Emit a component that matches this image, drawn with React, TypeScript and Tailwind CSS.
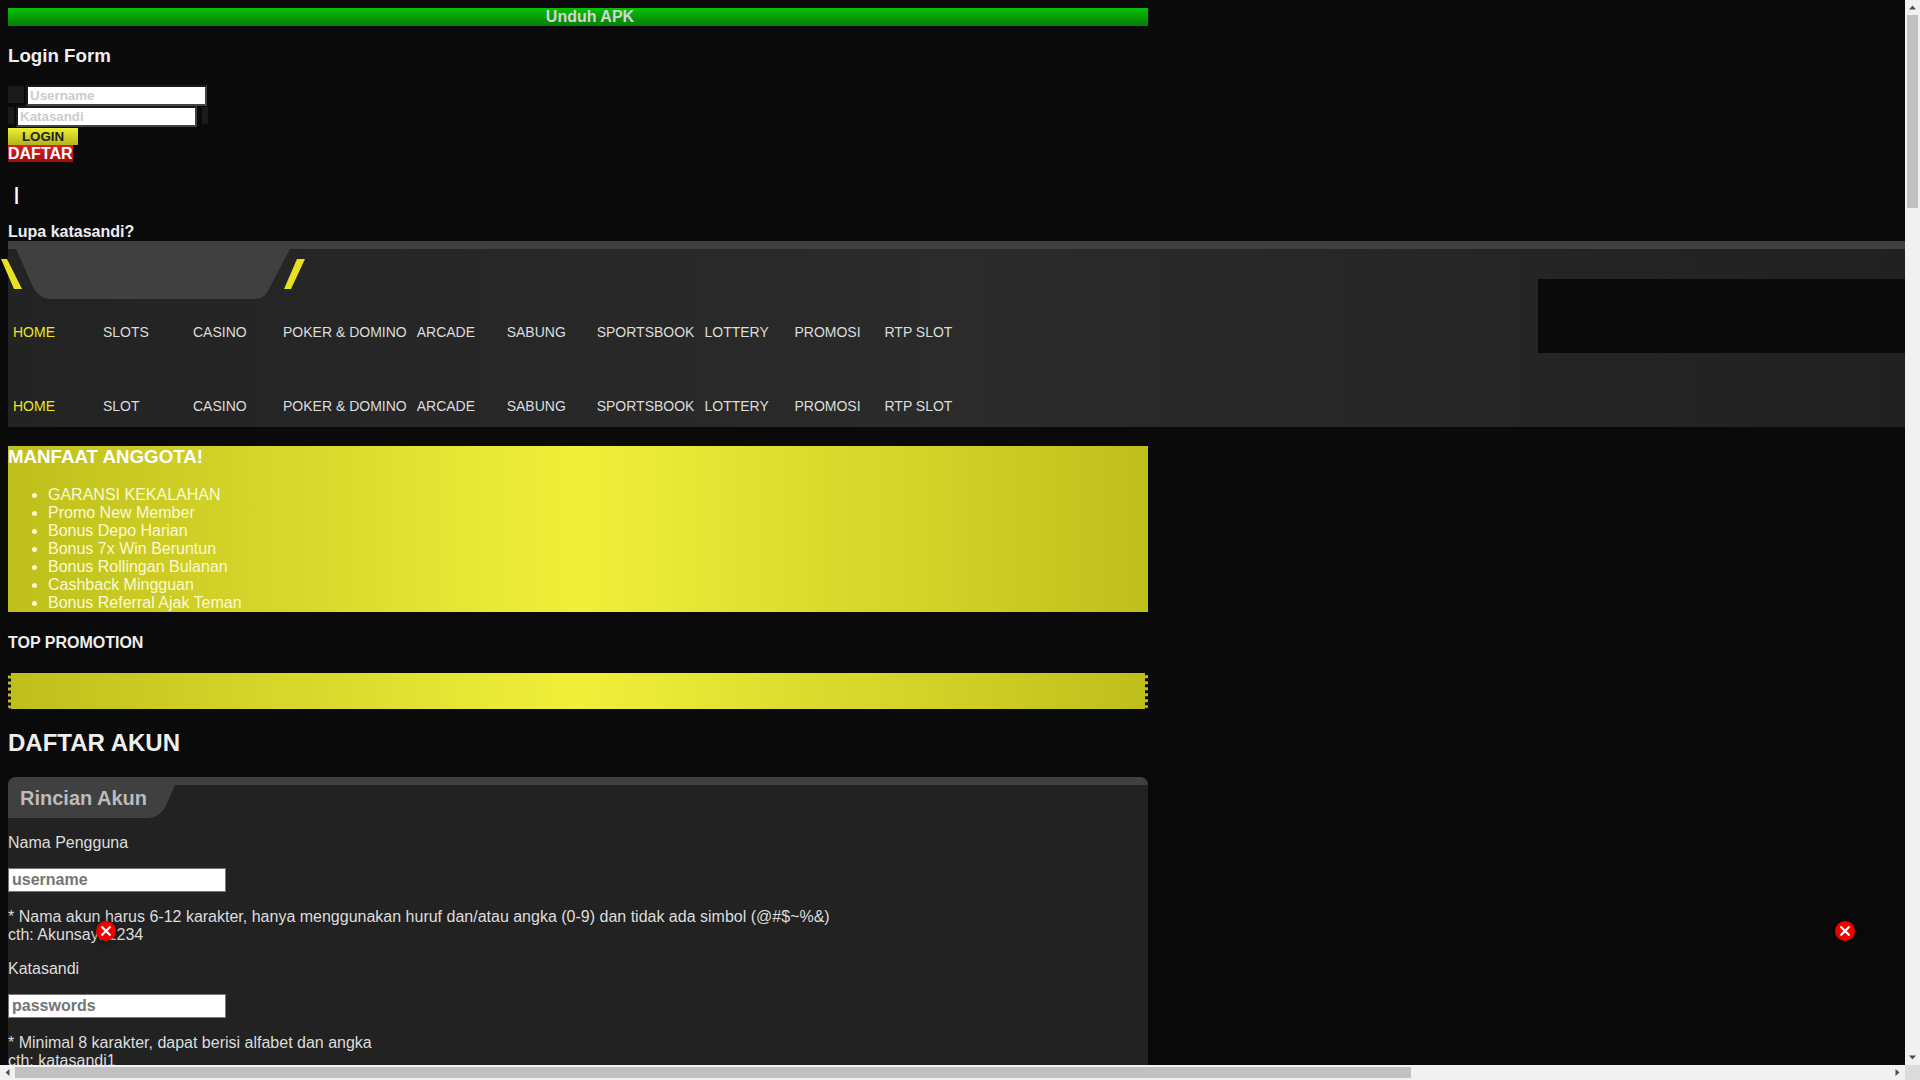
const navTop = ["SLOTS", "CASINO", "POKER & DOMINO", "ARCADE", "SABUNG", "SPORTSBOOK", "LOTTERY", "PROMOSI", "RTP SLOT"];
const navBottom = ["SLOT", "CASINO", "POKER & DOMINO", "ARCADE", "SABUNG", "SPORTSBOOK", "LOTTERY", "PROMOSI", "RTP SLOT"];
const perks = [
  "GARANSI KEKALAHAN",
  "Promo New Member",
  "Bonus Depo Harian",
  "Bonus 7x Win Beruntun",
  "Bonus Rollingan Bulanan",
  "Cashback Mingguan",
  "Bonus Referral Ajak Teman",
];

function NavRow({ items, className }: { items: string[]; className?: string }) {
  return (
    <div className={`flex text-sm leading-4 ${className ?? ""}`}>
      <a className="min-w-[90px] px-[5px] text-[#e8e820]">HOME</a>
      {items.map((item) => (
        <a key={item} className="min-w-[90px] px-[5px] text-[#dddddd]">
          {item}
        </a>
      ))}
    </div>
  );
}

function CloseBadge({ className }: { className: string }) {
  return (
    <div className={`absolute flex h-5 w-5 items-center justify-center rounded-full bg-[#f00000] shadow-[0_0_8px_rgba(0,0,0,0.6)] ${className}`}>
      <svg width="12" height="12" viewBox="0 0 12 12">
        <path d="M1.5 1.5l9 9M10.5 1.5l-9 9" stroke="#fff" strokeWidth="2.2" />
      </svg>
    </div>
  );
}

function LoginInput({ placeholder }: { placeholder: string }) {
  return (
    <input
      placeholder={placeholder}
      className="h-[21px] w-[181px] border-2 border-t-[#1a1a1a] border-r-[#444444] border-b-[#444444] border-l-[#1a1a1a] bg-white px-[2px] text-[13.33px] font-bold placeholder:text-[#cccccc]"
    />
  );
}

function FormInput({ placeholder }: { placeholder: string }) {
  return (
    <input
      placeholder={placeholder}
      className="block h-6 w-[218px] border border-[#777777] bg-white px-[3px] text-base font-bold placeholder:text-[#757575]"
    />
  );
}

function Arrow({ d }: { d: string }) {
  return (
    <div className="flex h-[15px] w-[15px] shrink-0 items-center justify-center">
      <svg width="9" height="9" viewBox="0 0 9 9">
        <path d={d} fill="#505050" />
      </svg>
    </div>
  );
}

export default function App() {
  return (
    <div className="flex h-screen w-screen flex-col overflow-hidden font-['Liberation_Sans',Arial,sans-serif] leading-[normal]">
      <div className="flex min-h-0 flex-1">
        <main className="relative min-w-0 flex-1 overflow-hidden bg-[#0a0a0a] pt-2 pl-2 text-[#dddddd]">
          {/* Download bar */}
          <div className="h-[18px] w-[1140px] bg-gradient-to-b from-[#08c208] to-[#067c06] pl-6 text-center text-base leading-[18px] font-bold text-[#d4d4d4]">
            Unduh APK
          </div>

          {/* Login */}
          <h4 className="mt-[19px] text-[18.72px] font-bold text-[#eeeeee]">Login Form</h4>
          <div className="mt-[18px] flex h-[21px] items-start gap-[2px]">
            <span className="mt-px h-[17px] w-4 bg-[#1b1b1b]" />
            <LoginInput placeholder="Username" />
          </div>
          <div className="flex h-[21px] items-start gap-[2px]">
            <span className="mt-px h-[17px] w-1.5 bg-[#1b1b1b]" />
            <LoginInput placeholder="Katasandi" />
            <span className="mt-px ml-[3px] h-[17px] w-1.5 bg-[#1b1b1b]" />
          </div>
          <button className="mt-px block h-[17px] w-[70px] bg-gradient-to-b from-[#f0f034] to-[#b4b41c] text-[13.33px] leading-[17px] font-bold text-[#222222]">
            LOGIN
          </button>
          <a className="block h-[17px] w-[65px] bg-gradient-to-b from-[#e02020] to-[#9c0e0e] text-base leading-[17px] font-bold text-white">
            DAFTAR
          </a>
          <div className="mt-[21px] ml-[6px] text-lg leading-[22px] font-bold text-white">|</div>
          <a className="mt-4 block text-base leading-[22px] font-bold text-[#eeeeee]">Lupa katasandi?</a>

          {/* Header band */}
          <div className="-mt-[2px] w-[1897px]">
            <div className="h-2 bg-[#404040]" />
            <div className="flex justify-between bg-gradient-to-r from-[#232323] via-[#2b2b2b] to-[#212121] pb-[13px]">
              <div>
                <svg width="310" height="50" viewBox="0 0 310 50" className="-ml-2 block">
                  <path d="M16 0H290L270 38Q266 50 255 50H51Q39 50 33 38Z" fill="#404040" />
                  <path d="M1 10H7L22 40H14Z" fill="#e8e020" />
                  <path d="M297 10H305L291 40H284Z" fill="#e8e020" />
                </svg>
                <NavRow items={navTop} className="mt-[25px]" />
                <NavRow items={navBottom} className="mt-[58px]" />
              </div>
              <div className="mt-[30px] h-[74px] w-[367px] bg-[#0a0a0a]" />
            </div>
          </div>

          {/* Member perks */}
          <div className="mt-[19px] h-[166px] w-[1140px] bg-gradient-to-r from-[#bfbf1c] via-[#f0f03a] to-[#bfbf1c] text-white">
            <h3 className="text-[18.72px] leading-[21px] font-bold">MANFAAT ANGGOTA!</h3>
            <ul className="mt-[19px] list-disc pl-10 text-base leading-[18px] text-[#fafad2]">
              {perks.map((perk) => (
                <li key={perk}>{perk}</li>
              ))}
            </ul>
          </div>

          <h5 className="mt-[22px] text-base leading-[18px] font-bold text-[#eeeeee]">TOP PROMOTION</h5>
          <div className="mt-[21px] h-9 w-[1140px] rounded-[3px] border-x-[3px] border-dotted border-[#0a0a0a] bg-gradient-to-r from-[#bfbf1c] via-[#f0f03a] to-[#bfbf1c]" />

          <h2 className="mt-5 text-2xl leading-7 font-bold text-[#eeeeee]">DAFTAR AKUN</h2>

          {/* Register form */}
          <div className="mt-5 w-[1140px] rounded-t-lg bg-[#222222] pb-10">
            <div className="h-2 rounded-t-lg bg-[#404040]" />
            <div className="h-[33px] w-[167px] bg-[#404040] pl-3 text-xl leading-[27px] font-bold text-[#bbbbbb] [clip-path:path('M0_0H167L157_23Q150_33_139_33H0Z')]">
              Rincian Akun
            </div>
            <div className="mt-4 text-base leading-[18px]">Nama Pengguna</div>
            <div className="mt-4">
              <FormInput placeholder="username" />
            </div>
            <p className="mt-4 text-base leading-[18px]">
              * Nama akun harus 6-12 karakter, hanya menggunakan huruf dan/atau angka (0-9) dan tidak ada simbol (@#$~%&)
              <br />
              cth: Akunsaya1234
            </p>
            <div className="mt-4 text-base leading-[18px]">Katasandi</div>
            <div className="mt-4">
              <FormInput placeholder="passwords" />
            </div>
            <p className="mt-4 text-base leading-[18px]">
              * Minimal 8 karakter, dapat berisi alfabet dan angka
              <br />
              cth: katasandi1
            </p>
          </div>

          <CloseBadge className="top-[921px] left-[96px]" />
          <CloseBadge className="top-[921px] left-[1835px]" />
        </main>

        {/* Vertical scrollbar */}
        <div className="flex w-[15px] shrink-0 flex-col items-center bg-[#f1f1f1]">
          <Arrow d="M4.5 2.5L8 6.5H1Z" />
          <div className="h-[193px] w-[11px] bg-[#c1c1c1]" />
          <div className="flex-1" />
          <Arrow d="M1 2.5H8L4.5 6.5Z" />
        </div>
      </div>

      {/* Horizontal scrollbar */}
      <div className="flex h-[15px] shrink-0 items-center bg-[#f1f1f1]">
        <Arrow d="M2.5 4.5L6.5 1V8Z" />
        <div className="h-[11px] w-[1396px] bg-[#c1c1c1]" />
        <div className="flex-1" />
        <Arrow d="M2.5 1L6.5 4.5L2.5 8Z" />
        <div className="h-[15px] w-[15px] shrink-0 bg-[#dcdcdc]" />
      </div>
    </div>
  );
}
